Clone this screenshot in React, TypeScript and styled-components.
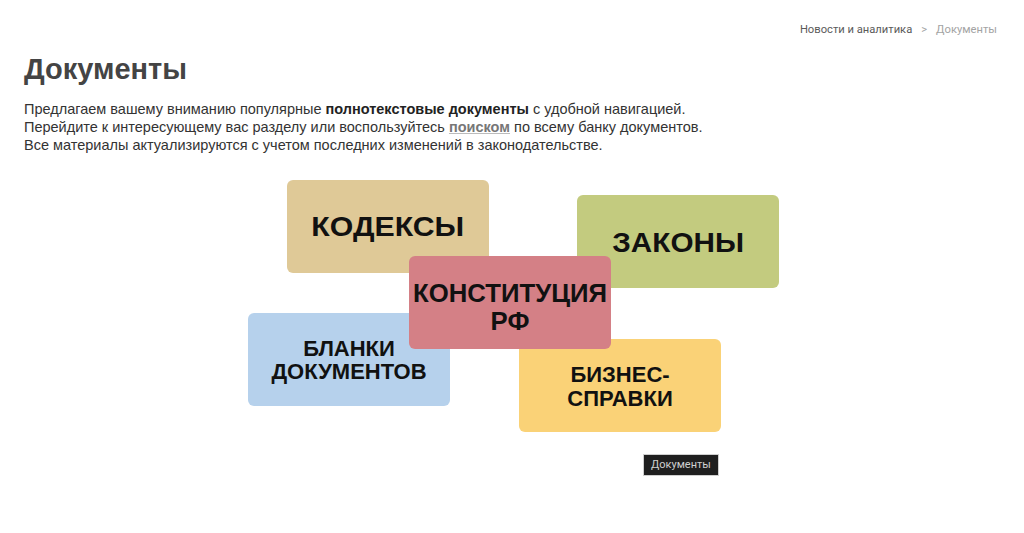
import React from "react";
import styled, { createGlobalStyle } from "styled-components";

const GlobalStyle = createGlobalStyle`
	html, body {
		margin: 0;
		background: #ffffff;
	}
	body {
		font-family: "Liberation Sans", Arial, sans-serif;
		color: #333333;
	}
`;

const Page = styled.div`
	padding: 0 27px 0 24px;
`;

const Breadcrumbs = styled.nav`
	display: flex;
	justify-content: flex-end;
	align-items: center;
	gap: 9px;
	padding-top: 22px;
	font-family: Roboto, "Liberation Sans", sans-serif;
	font-size: 11.2px;
	line-height: 16px;
`;

const Crumb = styled.a<{ $current?: boolean }>`
	color: ${(p) => (p.$current ? "#a3a3a3" : "#5a5a5a")};
	text-decoration: none;
`;

const Separator = styled.span`
	color: #a3a3a3;
`;

const Title = styled.h1`
	margin: 14px 0 0;
	font-size: 29px;
	line-height: 34px;
	font-weight: bold;
	color: #444444;
`;

const Intro = styled.p`
	margin: 14px 0 0;
	font-size: 14.5px;
	line-height: 18px;
	color: #333333;

	& b {
		color: #222222;
	}

	& a {
		color: #777777;
		font-weight: bold;
		text-decoration: underline;
		text-decoration-color: #bbbbbb;
	}
`;

const Diagram = styled.div`
	position: relative;
	width: 532px;
	height: 300px;
	margin: 26px 0 0 224px;
`;

type CardProps = {
	$bg: string;
	$x: number;
	$y: number;
	$z?: number;
	$size: number;
	$lh: number;
	$shift: number;
};

const Card = styled.a<CardProps>`
	position: absolute;
	left: ${(p) => p.$x}px;
	top: ${(p) => p.$y}px;
	z-index: ${(p) => p.$z ?? 1};
	box-sizing: border-box;
	width: 202px;
	height: 93px;
	padding-top: ${(p) => p.$shift}px;
	border-radius: 6px;
	background: ${(p) => p.$bg};
	display: flex;
	align-items: center;
	justify-content: center;
	text-align: center;
	font-family: "Liberation Sans", Arial, sans-serif;
	font-weight: bold;
	font-size: ${(p) => p.$size}px;
	line-height: ${(p) => p.$lh}px;
	color: #111111;
	text-decoration: none;
`;

const CardLabel = styled.span<{ $stretch: number }>`
	display: inline-block;
	white-space: nowrap;
	transform: scaleX(${(p) => p.$stretch});
`;

const Tooltip = styled.div`
	position: absolute;
	left: 395px;
	top: 274px;
	z-index: 5;
	background: #1f1f1f;
	color: #d0d0d0;
	font-family: Roboto, "Liberation Sans", sans-serif;
	font-size: 11px;
	line-height: 20px;
	padding: 0 7px;
	border: 1px solid #cfcfcf;
`;

const cards = [
	{ label: "КОДЕКСЫ", bg: "#dfc997", x: 39, y: 0, size: 28, stretch: 1.08, lh: 30, shift: 0 },
	{ label: "ЗАКОНЫ", bg: "#c3cb7f", x: 329, y: 15, size: 28, stretch: 1.06, lh: 30, shift: 3 },
	{ label: "БЛАНКИ\nДОКУМЕНТОВ", bg: "#b6d1ec", x: 0, y: 133, size: 22, stretch: 1, lh: 23, shift: 1 },
	{ label: "БИЗНЕС-\nСПРАВКИ", bg: "#fad277", x: 271, y: 159, size: 22, stretch: 1, lh: 24, shift: 3 },
	{ label: "КОНСТИТУЦИЯ\nРФ", bg: "#d48086", x: 161, y: 76, size: 26, stretch: 0.99, lh: 28, shift: 9, z: 3 },
];

const App: React.FC = () => {
	return (
		<>
			<GlobalStyle />
			<Page>
				<Breadcrumbs>
					<Crumb href="#">Новости и аналитика</Crumb>
					<Separator>&gt;</Separator>
					<Crumb $current>Документы</Crumb>
				</Breadcrumbs>

				<Title>Документы</Title>

				<Intro>
					Предлагаем вашему вниманию популярные <b>полнотекстовые документы</b> с удобной навигацией.
					<br />
					Перейдите к интересующему вас разделу или воспользуйтесь <a href="#">поиском</a> по всему
					банку документов.
					<br />
					Все материалы актуализируются с учетом последних изменений в законодательстве.
				</Intro>

				<Diagram>
					{cards.map((c) => (
						<Card
							key={c.label}
							href="#"
							$bg={c.bg}
							$x={c.x}
							$y={c.y}
							$z={c.z}
							$size={c.size}
							$lh={c.lh}
							$shift={c.shift}
						>
							<CardLabel $stretch={c.stretch}>
								{c.label.split("\n").map((line, i) => (
									<React.Fragment key={i}>
										{i > 0 && <br />}
										{line}
									</React.Fragment>
								))}
							</CardLabel>
						</Card>
					))}
					<Tooltip>Документы</Tooltip>
				</Diagram>
			</Page>
		</>
	);
};

export default App;
